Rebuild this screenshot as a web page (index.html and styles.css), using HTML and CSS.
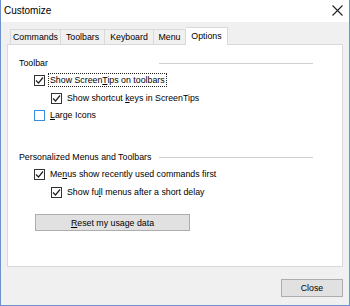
FILE: index.html
```html
<!DOCTYPE html>
<html lang="en">
<head>
    <meta charset="UTF-8">
    <title>Customize</title>
    <link rel="stylesheet" href="styles.css">
</head>
<body>
    <div class="window">
        <div class="titlebar">
            <span class="title">Customize</span>
            <svg class="close-x" width="11" height="11" viewBox="0 0 11 11">
                <path d="M0.5 0.5 L10.5 10.5 M10.5 0.5 L0.5 10.5" stroke="#222" stroke-width="1.1" fill="none"/>
            </svg>
        </div>

        <div class="tabs">
            <div class="tab tab-commands">Commands</div>
            <div class="tab tab-toolbars">Toolbars</div>
            <div class="tab tab-keyboard">Keyboard</div>
            <div class="tab tab-menu">Menu</div>
            <div class="tab tab-options active">Options</div>
        </div>

        <div class="panel">
            <div class="group-head">
                <span class="group-label">Toolbar</span>
                <span class="group-line"></span>
            </div>
            <div class="check-row">
                <span class="box checked"><svg width="9" height="9" viewBox="0 0 9 9"><path d="M1 4.5 L3.5 7 L8 1.5" stroke="#222" stroke-width="1.2" fill="none"/></svg></span>
                <span class="label focused">Show Screen<u>T</u>ips on toolbars</span>
            </div>
            <div class="check-row sub">
                <span class="box checked"><svg width="9" height="9" viewBox="0 0 9 9"><path d="M1 4.5 L3.5 7 L8 1.5" stroke="#222" stroke-width="1.2" fill="none"/></svg></span>
                <span class="label">Show shortcut <u>k</u>eys in ScreenTips</span>
            </div>
            <div class="check-row">
                <span class="box hover"></span>
                <span class="label"><u>L</u>arge Icons</span>
            </div>

            <div class="group-head second">
                <span class="group-label">Personalized Menus and Toolbars</span>
                <span class="group-line"></span>
            </div>
            <div class="check-row">
                <span class="box checked"><svg width="9" height="9" viewBox="0 0 9 9"><path d="M1 4.5 L3.5 7 L8 1.5" stroke="#222" stroke-width="1.2" fill="none"/></svg></span>
                <span class="label">Me<u>n</u>us show recently used commands first</span>
            </div>
            <div class="check-row sub">
                <span class="box checked"><svg width="9" height="9" viewBox="0 0 9 9"><path d="M1 4.5 L3.5 7 L8 1.5" stroke="#222" stroke-width="1.2" fill="none"/></svg></span>
                <span class="label">Show fu<u>l</u>l menus after a short delay</span>
            </div>

            <button class="btn reset"><u>R</u>eset my usage data</button>
        </div>

        <div class="footer">
            <button class="btn close">Close</button>
        </div>
    </div>
</body>
</html>
```

FILE: styles.css
```css
body {
    margin: 0;
    padding: 0;
    font-family: 'Liberation Sans', Arial, sans-serif;
    font-size: 8.8px;
    color: #000;
    background-color: #f0f0f0;
}
.window {
    width: 350px;
    height: 306px;
    box-sizing: border-box;
    border: 1px solid #6f8fcf;
    border-top: none;
    background-color: #f0f0f0;
    display: flex;
    flex-direction: column;
}
.titlebar {
    height: 22px;
    background-color: #fff;
    display: flex;
    align-items: center;
    justify-content: space-between;
    padding: 0 6px 0 3px;
}
.title {
    font-size: 10px;
    margin-top: -1px;
}
.close-x {
    margin-top: -2px;
}
.tabs {
    display: flex;
    align-items: flex-end;
    padding: 5px 0 0 9px;
    position: relative;
    z-index: 1;
}
.tab {
    height: 15px;
    box-sizing: border-box;
    border: 1px solid #d9d9d9;
    border-bottom: none;
    border-right: none;
    background-color: #f0f0f0;
    display: flex;
    align-items: center;
    justify-content: center;
    margin-bottom: 1px;
}
.tab-commands { width: 50px; }
.tab-toolbars { width: 44px; }
.tab-keyboard { width: 49px; }
.tab-menu { width: 33px; border-right: 1px solid #d9d9d9; }
.tab-options { width: 42px; }
.tab.active {
    height: 18px;
    margin-bottom: 0;
    margin-left: 0;
    background-color: #fff;
    border-right: 1px solid #d9d9d9;
    border-left: none;
    padding-bottom: 2px;
}
.panel {
    margin: -1px 6px 0 6px;
    height: 223px;
    box-sizing: border-box;
    border: 1px solid #d9d9d9;
    background-color: #fff;
    padding-top: 11px;
}
.group-head {
    display: grid;
    grid-template-columns: 151px 154px;
    align-items: center;
    height: 14px;
}
.group-head.second {
    margin-top: 28px;
}
.group-label {
    padding-left: 11px;
}
.group-line {
    height: 1px;
    border-top: 1px solid #cfcfcf;
    margin-top: 1px;
}
.check-row {
    display: flex;
    align-items: center;
    height: 14px;
    margin-top: 3px;
    padding-left: 26px;
}
.check-row.sub {
    padding-left: 43px;
    margin-top: 4px;
}
.box {
    width: 11px;
    height: 11px;
    box-sizing: border-box;
    border: 1px solid #333;
    background-color: #fff;
    display: flex;
    align-items: center;
    justify-content: center;
}
.box.hover {
    border-color: #3a8cdc;
}
.label {
    margin-left: 3px;
    padding: 1px 1px;
    border: 1px solid transparent;
}
.label.focused {
    border: 1px dotted #222;
}
.btn {
    font-family: 'Liberation Sans', Arial, sans-serif;
    font-size: 8.8px;
    color: #000;
    background-color: #e1e1e1;
    border: 1px solid #adadad;
    padding: 0;
    box-sizing: border-box;
}
.reset {
    display: block;
    margin: 15px 0 0 27px;
    width: 155px;
    height: 17px;
}
.footer {
    display: flex;
    justify-content: flex-end;
    padding: 12px 6px 0 0;
}
.close {
    width: 62px;
    height: 18px;
}
```
